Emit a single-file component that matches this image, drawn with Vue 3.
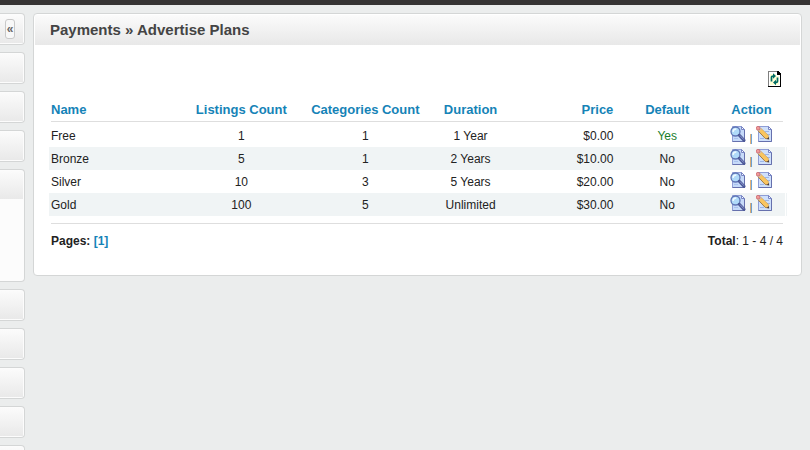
<script setup>
const plans = [
  { name: 'Free', listings: 1, categories: 1, duration: '1 Year', price: '$0.00', isDefault: true },
  { name: 'Bronze', listings: 5, categories: 1, duration: '2 Years', price: '$10.00', isDefault: false },
  { name: 'Silver', listings: 10, categories: 3, duration: '5 Years', price: '$20.00', isDefault: false },
  { name: 'Gold', listings: 100, categories: 5, duration: 'Unlimited', price: '$30.00', isDefault: false },
]
const sections = ['toggle', 'closed', 'closed', 'closed', 'open', 'closed', 'closed', 'closed', 'closed', 'closed']
</script>

<template>
  <div class="page">
    <header class="topbar"></header>
    <div class="body">
      <aside class="sidebar">
        <div v-for="(kind, i) in sections" :key="i" class="box" :class="kind">
          <div class="box-head">
            <button v-if="kind === 'toggle'" class="collapse" type="button">«</button>
          </div>
        </div>
      </aside>

      <main class="panel">
        <h1 class="panel-head">Payments » Advertise Plans</h1>
        <div class="content">
          <div class="tools">
            <a href="#" class="refresh" aria-label="Refresh">
              <svg width="13" height="16" viewBox="0 0 13 16">
                <g shape-rendering="crispEdges">
                  <path d="M0 0H10L13 3V16H0Z" fill="#000" />
                  <path d="M0 0H9V1H1V15H0Z" fill="#808080" />
                  <path d="M1 1H9V4H12V15H1Z" fill="#fff" />
                  <path d="M2 3H8V5H11V14H2Z" fill="#ffffd4" />
                  <path d="M9 1H10V3H12V4H9Z" fill="#000" />
                </g>
                <path d="M3.5 10.5V6.5Q3.5 5 5.5 5M9.5 6.5V10Q9.5 11.5 7.5 11.5" fill="none" stroke="#006b64" stroke-width="1.7" />
                <path d="M5 2.2L8 5L5 7.8ZM8 8.7L5 11.5L8 14.3Z" fill="#006b64" />
              </svg>
            </a>
          </div>

          <table class="plans">
            <thead>
              <tr>
                <th class="name">Name</th>
                <th class="listings">Listings Count</th>
                <th class="categories">Categories Count</th>
                <th class="duration">Duration</th>
                <th class="price">Price</th>
                <th class="default">Default</th>
                <th class="action">Action</th>
              </tr>
            </thead>
            <tbody>
              <tr v-for="plan in plans" :key="plan.name">
                <td class="name">{{ plan.name }}</td>
                <td>{{ plan.listings }}</td>
                <td>{{ plan.categories }}</td>
                <td>{{ plan.duration }}</td>
                <td class="price">{{ plan.price }}</td>
                <td class="default" :class="{ yes: plan.isDefault }">{{ plan.isDefault ? 'Yes' : 'No' }}</td>
                <td class="action">
                  <div class="actions">
                    <a href="#" :aria-label="'View ' + plan.name">
                      <svg width="16" height="16" viewBox="0 0 16 16">
                        <path d="M2.5 .5H11.5L14.5 3.5V15.5H2.5Z" fill="#c6daf9" stroke="#8f9dd5" />
                        <path d="M14.5 3.5V15.5H2.5" fill="none" stroke="#6670ad" />
                        <path d="M11.5 .5V3.5H14.5Z" fill="#f5f9ff" stroke="#7985c4" />
                        <path d="M4 12.5H8" stroke="#a9c2ee" />
                        <circle cx="5.5" cy="5.5" r="4.5" fill="#b0daf9" stroke="#6075b5" stroke-width="1.3" />
                        <path d="M3 5.8Q3.3 3 6.3 3" fill="none" stroke="#f1fbff" stroke-width="1.5" />
                        <path d="M9.3 9.3L14 14.3" stroke="#4b5796" stroke-width="3" stroke-linecap="round" />
                        <path d="M10 9.5L13.8 13.6" stroke="#8e9cd3" stroke-width="1" />
                      </svg>
                    </a>
                    <span class="divider">|</span>
                    <a href="#" :aria-label="'Edit ' + plan.name">
                      <svg width="16" height="16" viewBox="0 0 16 16">
                        <path d="M2.5 .5H12.5L15.5 3.5V15.5H2.5Z" fill="#cfe0fb" stroke="#8f9dd5" />
                        <path d="M15.5 3.5V15.5H2.5" fill="none" stroke="#6670ad" />
                        <path d="M12.5 .5V3.5H15.5Z" fill="#f5f9ff" stroke="#7985c4" />
                        <path d="M9 5.5H13M11 8.5H14M4 12.5H8" stroke="#9db6e6" />
                        <path d="M1.8 4.6L4.6 2L12.2 9.2L13 13.2L9.2 12.4Z" fill="#f9c560" />
                        <path d="M1.8 4.6L9.2 12.4L12.4 13" fill="none" stroke="#96703c" stroke-width=".9" />
                        <path d="M4.6 2L12.2 9.2L12.8 12.6" fill="none" stroke="#c99a4e" stroke-width=".6" />
                        <path d="M11 12.7L13.2 13.5L12.7 11Z" fill="#3e3644" />
                        <path d="M1.9 4.5L4.5 2L5.5 3L2.9 5.5Z" fill="#c9c2c0" />
                        <circle cx="2.1" cy="2.2" r="1.9" fill="#f09a98" stroke="#c45c66" stroke-width=".7" />
                      </svg>
                    </a>
                  </div>
                </td>
              </tr>
            </tbody>
          </table>

          <footer class="summary">
            <div><b>Pages: <a href="#">[1]</a></b></div>
            <div><b>Total</b>: 1 - 4 / 4</div>
          </footer>
        </div>
      </main>
    </div>
  </div>
</template>

<style>
body {
  margin: 0;
  background: #ebeded;
}
</style>

<style scoped>
.page {
  height: 100vh;
  overflow: hidden;
  font: 12px/16px "Liberation Sans", Arial, sans-serif;
  color: #222;
}
.topbar {
  height: 5px;
  background: #353333;
}
.body {
  display: flex;
  align-items: flex-start;
  gap: 8px;
  padding: 8px 8px 0 0;
}
.sidebar {
  flex: none;
  width: 25px;
  display: flex;
  flex-direction: column;
  gap: 7px;
}
.box {
  box-sizing: border-box;
  height: 32px;
  padding: 1px 1px 1px 0;
  border: 1px solid #d4d6d6;
  border-left: 0;
  border-radius: 0 4px 4px 0;
  background: #fcfcfc;
}
.box-head {
  height: 28px;
  background: linear-gradient(#fbfbfb, #e9e9e9);
}
.box.open {
  height: 113px;
}
.toggle .box-head {
  display: flex;
  align-items: center;
  justify-content: flex-end;
  padding-right: 8px;
}
.collapse {
  box-sizing: border-box;
  width: 10px;
  height: 20px;
  padding: 0;
  border: 1px solid #c9c9c9;
  border-radius: 3px;
  font: bold 12px/16px "Liberation Sans", Arial, sans-serif;
  color: #666;
  background: #f8f8f8;
}
.panel {
  flex: 1;
  min-width: 0;
  padding: 1px;
  border: 1px solid #d4d6d6;
  border-radius: 4px;
  background: #fff;
}
.panel-head {
  margin: 0;
  padding: 0 15px;
  font-size: 15px;
  line-height: 30px;
  color: #444;
  background: linear-gradient(#fbfbfb, #e8e8e8);
}
.content {
  padding: 26px 15px 25px 14px;
}
.tools {
  display: flex;
  justify-content: flex-end;
  padding-right: 4px;
}
.refresh,
.refresh svg,
.actions a,
.actions svg {
  display: block;
}
.plans {
  width: 100%;
  margin-top: 10px;
  border-collapse: separate;
  border-spacing: 0;
  table-layout: fixed;
}
th,
td {
  padding: 0;
  text-align: center;
}
th {
  height: 26px;
  padding-bottom: 1px;
  font-size: 13px;
  color: #1583b7;
}
thead tr {
  background: linear-gradient(#dedede, #dedede) 2px 24px / calc(100% - 4px) 1px no-repeat;
}
td {
  height: 23px;
}
tbody tr:nth-child(even) {
  background: #f0f4f5;
  box-shadow: 1px 0 #fff, 2px 0 #f0f4f5;
}
.name {
  padding-left: 2px;
  text-align: left;
}
th.listings {
  width: 16.3%;
}
th.categories {
  width: 17.4%;
}
th.duration {
  width: 11.2%;
}
.price {
  width: 13.8%;
  padding-right: 4px;
  text-align: right;
}
.default {
  width: 13%;
  padding-left: 2px;
}
.action {
  width: 9.1%;
}
th.action {
  padding-left: 3px;
}
td.action {
  padding-left: 2px;
}
.yes {
  color: #1a7d2b;
}
.actions {
  display: flex;
  justify-content: center;
  align-items: flex-start;
  gap: 4px;
  height: 20px;
}
.divider {
  align-self: flex-end;
  font-size: 10px;
  line-height: 14px;
  color: #333;
}
.summary {
  display: flex;
  justify-content: space-between;
  margin: 7px 2px 0;
  padding-top: 9px;
  border-top: 1px solid #dedede;
}
a {
  color: #1583b7;
  text-decoration: none;
}
</style>
